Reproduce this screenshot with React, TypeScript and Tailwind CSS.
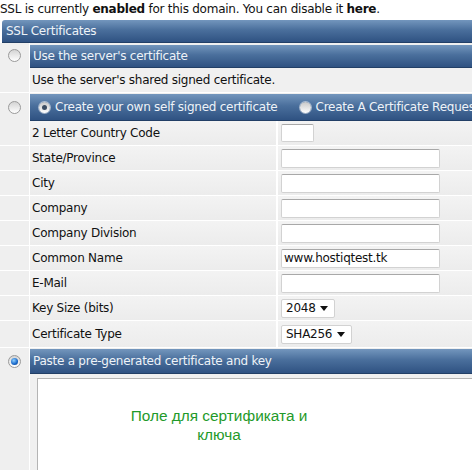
import React from 'react';

const fields: { label: string; kind: 'short' | 'text' | 'select'; value?: string; w?: string }[] = [
  { label: '2 Letter Country Code', kind: 'short' },
  { label: 'State/Province', kind: 'text' },
  { label: 'City', kind: 'text' },
  { label: 'Company', kind: 'text' },
  { label: 'Company Division', kind: 'text' },
  { label: 'Common Name', kind: 'text', value: 'www.hostiqtest.tk' },
  { label: 'E-Mail', kind: 'text' },
  { label: 'Key Size (bits)', kind: 'select', value: '2048', w: 'w-[54px]' },
  { label: 'Certificate Type', kind: 'select', value: 'SHA256', w: 'w-[71px]' },
];

const band =
  'bg-[linear-gradient(to_bottom,#7396bd_0%,#4a6f9c_45%,#2f5282_100%)] border-b border-[#223f66] text-[#eef3f8]';

const GrayRadio = ({ on = false }: { on?: boolean }) => (
  <span className="flex h-[13px] w-[13px] shrink-0 items-center justify-center rounded-full border border-[#9a9a9a] bg-[linear-gradient(to_bottom,#d4d4d4,#ffffff)]">
    {on && (
      <span className="h-[7px] w-[7px] rounded-full bg-[radial-gradient(circle_at_40%_35%,#8fd0ff,#1565c8_60%,#0b3d80)]" />
    )}
  </span>
);

const BandRadio = ({ on = false }: { on?: boolean }) => (
  <span className="flex h-[11px] w-[11px] shrink-0 items-center justify-center rounded-full bg-[linear-gradient(to_bottom,#c8c8c8,#ffffff)] shadow-[0_0_0_1px_rgba(255,255,255,0.5)]">
    {on && <span className="h-[5px] w-[5px] rounded-full bg-[#3b4d63]" />}
  </span>
);

const LeftCell = ({ children }: { children?: React.ReactNode }) => (
  <div className="flex w-[30px] shrink-0 items-center justify-center border-r border-white bg-[#efefef]">
    {children}
  </div>
);

export default function App() {
  return (
    <div className="h-[470px] w-[472px] overflow-hidden bg-white font-['DejaVu_Sans',Verdana,sans-serif] text-[12px] tracking-[-0.25px] text-[#111]">
      <p className="h-[20px] whitespace-nowrap leading-[19px]">
        SSL is currently <b>enabled</b> for this domain. You can disable it <b>here</b>.
      </p>

      <div className={`ml-[2px] flex h-[23px] items-center rounded-tl-[3px] pl-[4px] ${band}`}>SSL Certificates</div>

      {/* server certificate */}
      <div className="flex h-[25px] bg-[#efefef]">
        <LeftCell>
          <GrayRadio />
        </LeftCell>
        <div className={`mt-[2px] flex flex-1 items-center pl-[3px] ${band}`}>Use the server's certificate</div>
      </div>
      <div className="flex h-[25px] border-b border-white">
        <LeftCell />
        <div className="flex flex-1 items-center bg-[#f0f0f0] pl-[2px]">Use the server's shared signed certificate.</div>
      </div>

      {/* self signed */}
      <div className="flex h-[28px] bg-[#efefef]">
        <LeftCell>
          <GrayRadio />
        </LeftCell>
        <div className={`mt-[1px] flex min-w-0 flex-1 items-center overflow-hidden whitespace-nowrap pl-[9px] ${band}`}>
          <BandRadio on />
          <span className="ml-[5px] shrink-0">Create your own self signed certificate</span>
          <span className="ml-[22px] flex shrink-0">
            <BandRadio />
          </span>
          <span className="ml-[5px] shrink-0">Create A Certificate Request</span>
        </div>
      </div>

      {fields.map((f, i) => (
        <div key={f.label} className={`flex border-b border-white ${i === fields.length - 1 ? 'h-[27px]' : 'h-[25px]'}`}>
          <LeftCell />
          <div className="flex w-[248px] shrink-0 items-center border-r-2 border-white bg-[linear-gradient(to_bottom,#f3f3f3,#ececec)] pl-[2px]">
            {f.label}
          </div>
          <div className="flex flex-1 items-center bg-[linear-gradient(to_bottom,#f3f3f3,#ececec)] pl-[3px]">
            {f.kind === 'short' && (
              <span className="h-[18px] w-[33px] rounded-[2px] border border-[#d2d2d2] border-t-[#a8a8a8] bg-white" />
            )}
            {f.kind === 'text' && (
              <span className="flex h-[19px] w-[159px] items-center rounded-[2px] border border-[#d2d2d2] border-t-[#a8a8a8] bg-white pl-[2px]">
                {f.value}
              </span>
            )}
            {f.kind === 'select' && (
              <span
                className={`flex h-[19px] items-center justify-between rounded-[2px] border border-[#d2d2d2] bg-white pl-[4px] pr-[6px] ${f.w}`}
              >
                {f.value}
                <svg width="8" height="5" viewBox="0 0 8 5">
                  <path d="M0 0h8L4 5z" fill="#111" />
                </svg>
              </span>
            )}
          </div>
        </div>
      ))}

      {/* paste */}
      <div className="flex h-[26px] bg-[#efefef]">
        <LeftCell>
          <GrayRadio on />
        </LeftCell>
        <div className={`mt-[1px] flex flex-1 items-center pl-[3px] ${band}`}>Paste a pre-generated certificate and key</div>
      </div>
      <div className="flex h-[120px]">
        <LeftCell />
        <div className="flex-1 bg-[#f0f0f0] pl-[7px] pt-[4px]">
          <div className="h-full border border-[#b4b4b4] border-r-0 bg-white pt-[27px]">
            <p className="ml-[81px] w-[200px] text-center font-['Liberation_Sans',Arial,sans-serif] text-[15.4px] leading-[19px] tracking-normal text-[#1f9a2a]">
              Поле для сертификата и ключа
            </p>
          </div>
        </div>
      </div>
    </div>
  );
}
